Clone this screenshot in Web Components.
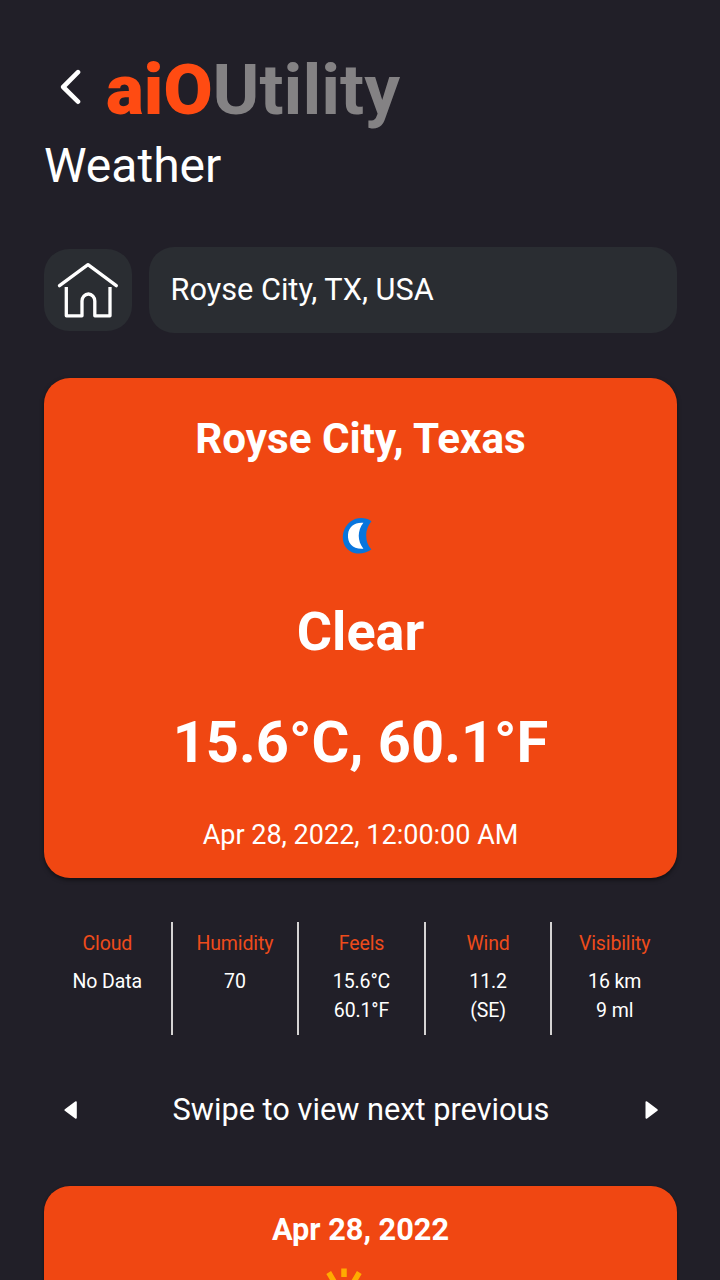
<!DOCTYPE html>
<html lang="en">
<head>
<meta charset="utf-8">
<title>aiOUtility - Weather</title>
<style>
    html, body {
        margin: 0;
        height: 1280px;
        overflow: hidden;
        background: #211f28;
    }
    body {
        font-family: Roboto, sans-serif;
        color: #fff;
    }
</style>
</head>
<body>
<weather-app>
    <app-header slot="header" page="Weather"></app-header>
    <search-bar slot="search">Royse City, TX, USA</search-bar>
    <current-card place="Royse City, Texas" condition="Clear" temp="15.6°C, 60.1°F" time="Apr 28, 2022, 12:00:00 AM"></current-card>
    <stat-row>
        <stat-item label="Cloud">No Data</stat-item>
        <stat-item label="Humidity">70</stat-item>
        <stat-item label="Feels">15.6°C<br>60.1°F</stat-item>
        <stat-item label="Wind">11.2<br>(SE)</stat-item>
        <stat-item label="Visibility">16 km<br>9 ml</stat-item>
    </stat-row>
    <swipe-hint>Swipe to view next previous</swipe-hint>
    <forecast-card>Apr 28, 2022</forecast-card>
</weather-app>

<script>
    // Small base class: every element renders once into an open shadow root
    class BaseElement extends HTMLElement {
        constructor() {
            super();
            this.attachShadow({ mode: 'open' });
        }

        connectedCallback() {
            this.shadowRoot.innerHTML = this.render();
        }
    }

    class WeatherApp extends BaseElement {
        render() {
            return `
                <style>
                    :host {
                        display: flex; flex-direction: column; box-sizing: border-box;
                        width: 720px; height: 1280px; padding: 54px 43px 0 44px; overflow: hidden;
                    }
                </style>
                <slot name="header"></slot>
                <slot name="search"></slot>
                <slot></slot>
            `;
        }
    }

    class AppHeader extends BaseElement {
        render() {
            return `
                <style>
                    :host { display: block; flex: none; height: 193px; }
                    .brand { display: flex; align-items: center; height: 72px; }
                    svg { display: block; margin: -6px 25px 0 15px; }
                    .logo { font-size: 71.2px; line-height: 72px; font-weight: 700; color: #848284; white-space: nowrap; }
                    .logo b { color: #ff4b12; }
                    .page { margin-top: 12px; font-size: 48px; line-height: 56px; }
                </style>
                <div class="brand">
                    <svg width="22" height="38" viewBox="0 0 22 38" fill="none" stroke="#fff" stroke-width="4.6" stroke-linecap="round" stroke-linejoin="round">
                        <path d="M19 4.2 4.2 19 19 33.7"/>
                    </svg>
                    <div class="logo"><b>aiO</b>Utility</div>
                </div>
                <div class="page">${this.getAttribute('page')}</div>
            `;
        }
    }

    class SearchBar extends BaseElement {
        render() {
            return `
                <style>
                    :host { display: flex; flex: none; align-items: center; gap: 17px; height: 86px; }
                    .home, .field { display: flex; align-items: center; background: #2a2d32; }
                    .home { justify-content: center; width: 88px; height: 82px; border-radius: 25px; }
                    .field {
                        flex: 1; box-sizing: border-box; height: 86px; padding: 0 21px 1px 21.5px; border-radius: 25px;
                        font-size: 30.7px; line-height: 40px; white-space: nowrap;
                    }
                </style>
                <div class="home">
                    <svg width="88" height="82" viewBox="0 0 88 82" fill="none" stroke="#fff" stroke-width="3.3" stroke-linecap="round" stroke-linejoin="round">
                        <path d="M15.5 36.7 44 15.7 72.3 36.7"/>
                        <path d="M22.3 38V66.8H38V52a6.4 7 0 0 1 12.8 0V66.8H66V38" stroke-linecap="butt"/>
                    </svg>
                </div>
                <div class="field"><slot></slot></div>
            `;
        }
    }

    class CurrentCard extends BaseElement {
        render() {
            return `
                <style>
                    :host {
                        display: flex; flex: none; flex-direction: column; align-items: center; box-sizing: border-box;
                        height: 500px; margin-top: 45px; padding-top: 33px; border-radius: 26px;
                        background: #f04712; box-shadow: 0 2px 4px rgba(0, 0, 0, 0.5); white-space: nowrap;
                    }
                    .place { font-size: 42.2px; line-height: 56px; font-weight: 700; }
                    svg { display: block; margin-top: 49px; margin-right: 1px; }
                    .condition { margin-top: 38px; font-size: 54px; line-height: 76px; font-weight: 700; }
                    .temp { margin-top: 34px; font-size: 57.8px; line-height: 76px; font-weight: 700; }
                    .time { margin-top: 36px; font-size: 27px; line-height: 38px; }
                </style>
                <div class="place">${this.getAttribute('place')}</div>
                <svg width="40" height="40" viewBox="0 0 40 40">
                    <path d="M31.5 5.2C25.5 1.2 17 .8 10.6 5.6 3.7 10.7 1 20.6 4 28c4 10 17 12.6 27.4 5.6C24.5 26.4 24.3 13 31.5 5.2Z" fill="#0875dd"/>
                    <path d="M23.4 6.8C15.3 6 8.7 10 8 18.500c-.7 8.800 5 15 15.400 14.200C17.200 24.800 17.200 14.800 23.400 6.800Z" fill="#fff"/>
                </svg>
                <div class="condition">${this.getAttribute('condition')}</div>
                <div class="temp">${this.getAttribute('temp')}</div>
                <div class="time">${this.getAttribute('time')}</div>
            `;
        }
    }

    class StatRow extends BaseElement {
        render() {
            return `
                <style>
                    :host {
                        display: grid; flex: none; grid-template-columns: repeat(5, 1fr);
                        height: 113px; margin-top: 43.5px;
                    }
                    ::slotted(:not(:first-child)) { border-left: 2px solid #d5d3d3; }
                </style>
                <slot></slot>
            `;
        }
    }

    class StatItem extends BaseElement {
        render() {
            return `
                <style>
                    :host {
                        display: block; box-sizing: border-box; padding-top: 8px; text-align: center;
                        font-size: 19.5px; letter-spacing: -0.12px; white-space: nowrap;
                    }
                    .label { line-height: 28px; color: #ee4b1b; }
                    .value { margin-top: 9px; line-height: 29px; }
                </style>
                <div class="label">${this.getAttribute('label')}</div>
                <div class="value"><slot></slot></div>
            `;
        }
    }

    class SwipeHint extends BaseElement {
        render() {
            return `
                <style>
                    :host {
                        display: flex; flex: none; align-items: center; justify-content: space-between; box-sizing: border-box;
                        height: 40px; margin-top: 55px; padding: 0 18px 0 19px;
                        font-size: 30.75px; line-height: 40px; white-space: nowrap;
                    }
                    svg { display: block; margin-top: 1px; }
                </style>
                <svg width="15" height="20" viewBox="0 0 15 20" fill="#fff" stroke="#fff" stroke-width="2" stroke-linejoin="round">
                    <path d="M12.8 2.2V17.8L2.4 10Z"/>
                </svg>
                <div><slot></slot></div>
                <svg width="15" height="20" viewBox="0 0 15 20" fill="#fff" stroke="#fff" stroke-width="2" stroke-linejoin="round">
                    <path d="M2.5 2.2V17.8L12.8 10Z"/>
                </svg>
            `;
        }
    }

    class ForecastCard extends BaseElement {
        render() {
            return `
                <style>
                    :host {
                        display: flex; flex: none; flex-direction: column; align-items: center; box-sizing: border-box;
                        height: 300px; margin-top: 56px; padding-top: 24px; border-radius: 26px;
                        background: #f04712; box-shadow: 0 1px 3px rgba(0, 0, 0, 0.5);
                    }
                    .date { font-size: 30.7px; line-height: 40px; font-weight: 700; }
                    svg { display: block; margin: 16px 33px 0 0; }
                </style>
                <div class="date"><slot></slot></div>
                <svg width="60" height="60" viewBox="0 0 60 60" stroke="#ffab00" stroke-width="5.5">
                    <path d="M30 2.5V11M14.7 6.5 20 15.500M45.300 6.500 40 15.500"/>
                    <circle cx="30" cy="32" r="12" fill="#ffab00" stroke="none"/>
                </svg>
            `;
        }
    }

    customElements.define('weather-app', WeatherApp);
    customElements.define('app-header', AppHeader);
    customElements.define('search-bar', SearchBar);
    customElements.define('current-card', CurrentCard);
    customElements.define('stat-row', StatRow);
    customElements.define('stat-item', StatItem);
    customElements.define('swipe-hint', SwipeHint);
    customElements.define('forecast-card', ForecastCard);
</script>
</body>
</html>
